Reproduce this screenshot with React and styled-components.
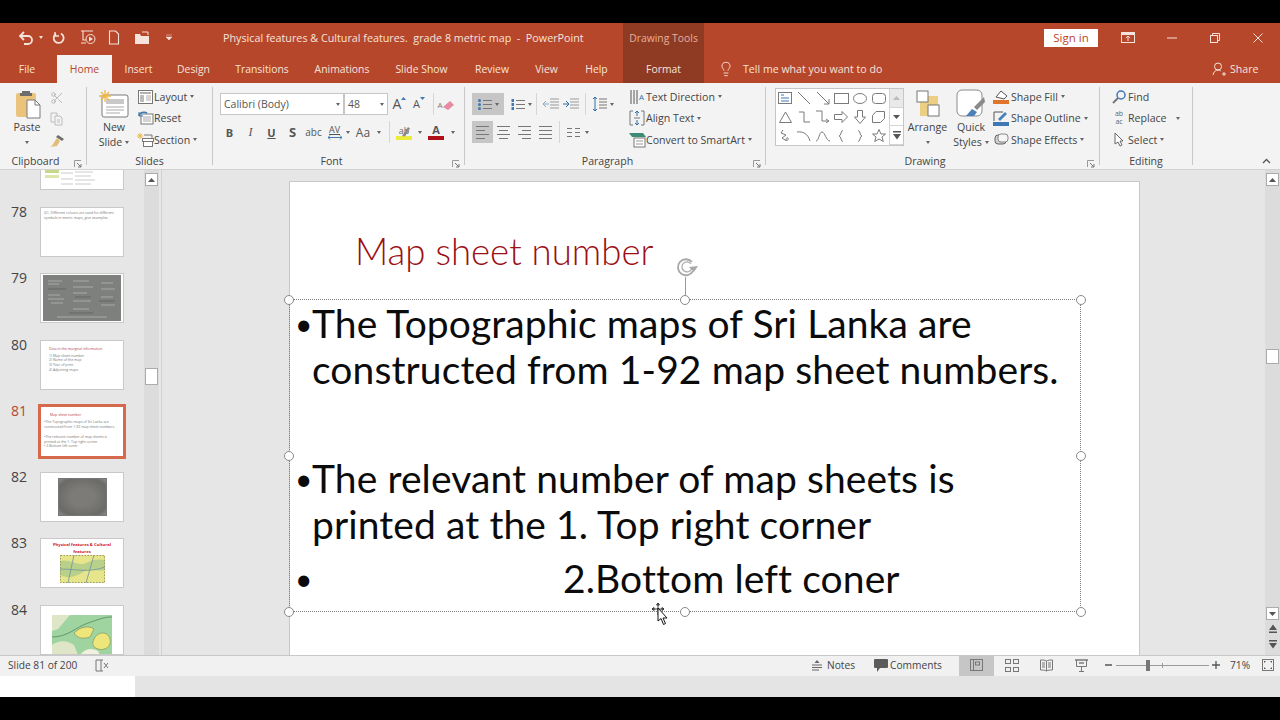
import React from 'react';
import styled, { createGlobalStyle } from 'styled-components';
import { Scissors, Lightbulb } from 'lucide-react';

const ORANGE = '#b7472a';
const UI = '"Open Sans", "Liberation Sans", sans-serif';
const SLIDE = 'Lato, "Open Sans", sans-serif';

const Global = createGlobalStyle`
  html, body { margin: 0; padding: 0; background: #000; }
  body { font-family: ${UI}; font-size: 10.6px; color: #444; }
  * { box-sizing: border-box; }
`;

const Page = styled.div`
  width: 1280px;
  height: 720px;
  padding: 23px 0;
  background: #000;
  overflow: hidden;
`;
const Win = styled.div`
  height: 674px;
  display: flex;
  flex-direction: column;
  background: #e6e6e6;
`;

/* title bar */
const TitleBar = styled.div`
  height: 29px;
  background: ${ORANGE};
  display: flex;
  align-items: stretch;
  color: #f6e3dc;
`;
const Qat = styled.div`
  width: 223px;
  padding-left: 18px;
  display: flex;
  align-items: center;
`;
const QatSlot = styled.span`
  width: ${p => p.$w}px;
  display: flex;
  align-items: center;
  justify-content: center;
`;
const DocTitle = styled.div`
  width: 400px;
  line-height: 31px;
  font-size: 10.75px;
  white-space: pre;
`;
const ContextCell = styled.div`
  width: 81px;
  background: #8f3a22;
  color: ${p => p.$dim ? '#e6b09c' : '#f6e3dc'};
  text-align: center;
  font-size: 10.4px;
  line-height: ${p => p.$dim ? '31px' : '34px'};
`;
const SignIn = styled.div`
  width: 54px;
  height: 18px;
  margin: 6px 0 0 340px;
  background: #fff;
  color: ${ORANGE};
  font-size: 11.5px;
  line-height: 18px;
  text-align: center;
`;
const WinBtn = styled.div`
  width: ${p => p.$w}px;
  display: flex;
  align-items: center;
  justify-content: center;
`;

/* tabs */
const TabBar = styled.div`
  height: 31px;
  background: ${ORANGE};
  display: flex;
  align-items: stretch;
  color: #f6e3dc;
`;
const Tab = styled.div`
  width: ${p => p.$w}px;
  margin-top: ${p => p.$active ? 3 : 0}px;
  background: ${p => p.$active ? '#f3f3f3' : 'transparent'};
  color: ${p => p.$active ? ORANGE : 'inherit'};
  text-align: center;
  font-size: 10.4px;
  line-height: ${p => p.$active ? '28px' : '34px'};
`;
const TellMe = styled.div`
  display: flex;
  align-items: center;
  width: 508px;
  padding: 2px 0 0 14px;
  gap: 9px;
  font-size: 10.6px;
`;
const Share = styled.div`
  display: flex;
  align-items: center;
  padding-top: 2px;
  gap: 4px;
  font-size: 10.6px;
`;

/* ribbon */
const Ribbon = styled.div`
  height: 87px;
  padding-top: 4px;
  background: #f3f3f3;
  border-bottom: 1px solid #d2d2d2;
  display: flex;
  position: relative;
`;
const Group = styled.div`
  width: ${p => p.$w}px;
  height: 78px;
  border-right: 1px solid #c8c8c8;
  position: relative;
`;
const GroupBody = styled.div`
  height: 66px;
  display: flex;
  padding-left: ${p => p.$pad || 0}px;
`;
const GroupLabel = styled.div`
  height: 16px;
  line-height: 16px;
  text-align: center;
  font-size: 10.6px;
  color: #444;
  padding-right: ${p => p.$shift || 0}px;
`;
const Launcher = styled.span`
  position: absolute;
  right: 4px;
  bottom: -3px;
  display: flex;
`;
const Collapse = styled.span`
  position: absolute;
  right: 9px;
  bottom: 5px;
  display: flex;
`;
const BigTool = styled.div`
  width: ${p => p.$w}px;
  display: flex;
  flex-direction: column;
  align-items: center;
  line-height: 15px;
  text-align: center;
`;
const BigIcon = styled.div`
  height: 33px;
  display: flex;
  align-items: center;
  justify-content: center;
  padding-left: ${p => p.$nudge || 0}px;
`;
const LabelLine = styled.div`
  height: 15px;
  display: flex;
  align-items: center;
  justify-content: center;
  gap: 3px;
`;
const Stack = styled.div`
  display: flex;
  flex-direction: column;
  margin-top: -1px;
`;
const RowBtn = styled.div`
  height: 21.5px;
  display: flex;
  align-items: center;
  white-space: nowrap;
`;
const RowIcon = styled.span`
  width: ${p => p.$w || 18}px;
  display: flex;
  align-items: center;
  justify-content: center;
  flex: none;
`;
const Caret = styled.span`
  display: inline-block;
  width: 0;
  height: 0;
  margin-left: ${p => p.$m ?? 3}px;
  border-left: 2.5px solid transparent;
  border-right: 2.5px solid transparent;
  border-top: 3px solid ${p => p.$c || '#666'};
  flex: none;
`;
const MiniStack = styled.div`
  width: ${p => p.$w}px;
  display: flex;
  flex-direction: column;
  align-items: center;
`;
const MiniIcon = styled.div`
  height: 21.5px;
  display: flex;
  align-items: center;
`;
const FontCol = styled.div`
  ${p => p.$w ? `width: ${p.$w}px;` : ''}
  padding-top: 6px;
  display: flex;
  flex-direction: column;
  gap: 6px;
`;
const ToolRow = styled.div`
  height: 22px;
  display: flex;
  align-items: center;
  margin-left: ${p => p.$ml || 0}px;
`;
const FontBox = styled.div`
  width: ${p => p.$w}px;
  height: 22px;
  padding: 0 3px;
  background: #fff;
  border: 1px solid #c6c6c6;
  display: flex;
  align-items: center;
  justify-content: space-between;
  font-size: 10.5px;
  color: #555;
`;
const Tool = styled.div`
  width: ${p => p.$w}px;
  height: 22px;
  margin-left: ${p => p.$ml || 0}px;
  display: flex;
  align-items: center;
  justify-content: center;
  background: ${p => p.$on ? '#c6c6c6' : 'transparent'};
  font-size: ${p => p.$fs || 11}px;
  font-weight: ${p => p.$b ? 700 : 400};
  font-style: ${p => p.$i ? 'italic' : 'normal'};
  text-decoration: ${p => p.$u ? 'underline' : 'none'};
  font-family: ${p => p.$serif ? '"Liberation Serif", serif' : 'inherit'};
  color: #555;
`;
const CaretCell = styled.span`
  width: ${p => p.$w}px;
  display: flex;
  justify-content: center;
`;
const VSep = styled.span`
  width: 1px;
  height: 22px;
  margin-left: ${p => p.$ml || 0}px;
  background: #d6d6d6;
  flex: none;
`;

/* icons built from a real letter and a small mark */
const Glyph = styled.span`
  display: inline-flex;
  flex-direction: ${p => p.$col ? 'column' : 'row'};
  align-items: ${p => p.$col ? 'center' : 'flex-start'};
  position: relative;
`;
const Letter = styled.span`
  font-size: ${p => p.$fs}px;
  line-height: ${p => p.$lh || p.$fs}px;
  font-weight: ${p => p.$b ? 700 : 400};
  text-decoration: ${p => p.$u ? 'underline' : 'none'};
  color: ${p => p.$c || '#555'};
  margin-left: ${p => p.$ml || 0}px;
`;
const GlyphOver = styled.span`
  position: absolute;
  right: ${p => p.$r || 0}px;
  bottom: ${p => p.$b || 0}px;
  display: flex;
`;

/* shape gallery */
const Gallery = styled.div`
  width: 129px;
  height: 58px;
  margin-top: 1px;
  background: #fff;
  border: 1px solid #c6c6c6;
  display: flex;
`;
const ShapeGrid = styled.div`
  width: 113px;
  display: grid;
  grid-template-columns: repeat(6, 18.7px);
  grid-template-rows: repeat(3, 1fr);
  place-items: center;
`;
const GalleryNav = styled.div`
  width: 14px;
  display: flex;
  flex-direction: column;
  border-left: 1px solid #d4d4d4;
`;
const NavBtn = styled.div`
  flex: 1;
  background: ${p => p.$off ? '#e9e9e9' : '#fff'};
  border-bottom: 1px solid #d4d4d4;
  display: flex;
  align-items: center;
  justify-content: center;
`;

/* main area */
const Main = styled.div`
  height: 485px;
  display: flex;
  overflow: hidden;
  background: #e6e6e6;
`;
const ThumbPanel = styled.div`
  width: 144px;
  overflow: hidden;
`;
const ThumbRow = styled.div`
  height: ${p => p.$first ? 37 : 66.3}px;
  display: flex;
  align-items: flex-start;
`;
const ThumbNum = styled.div`
  width: 40px;
  padding-left: 11px;
  font-size: 14px;
  line-height: 20px;
  margin-top: -5px;
  color: ${p => p.$sel ? '#b7472a' : '#444'};
`;
const Thumb = styled.div`
  width: 84px;
  height: ${p => p.$h || 50}px;
  background: #fff;
  border: 1px solid #c9c9c9;
  ${p => p.$first ? 'border-top: none;' : ''}
  ${p => p.$sel ? 'outline: 3px solid #d6694c; outline-offset: -1px;' : ''}
  overflow: hidden;
  display: flex;
  flex-direction: column;
  font-size: 3.5px;
  line-height: 4.9px;
  color: #777;
`;
const ThumbCopy = styled.div`
  padding: ${p => p.$pad || '3px 2px 0 3px'};
  color: ${p => p.$red ? '#b3443f' : 'inherit'};
  white-space: nowrap;
`;
const ThumbRedTitle = styled.div`
  margin-top: 2px;
  font-size: 4.2px;
  line-height: 7px;
  font-weight: 700;
  text-align: center;
  color: #d2131c;
`;
const ThumbArt = styled.div`
  display: flex;
  justify-content: center;
  padding-top: ${p => p.$top || 0}px;
`;
const Vignette = styled.div`
  width: 49px;
  height: 38px;
  background: radial-gradient(ellipse at center, #7c7b78 35%, #6a6a67 80%, #8b8b88 100%);
  border: 1px solid #77777a;
`;
const BarTrack = styled.div`
  width: ${p => p.$w}px;
  flex: none;
  background: ${p => p.$bg};
  padding: ${p => p.$pad || 0};
  display: flex;
  flex-direction: column;
  align-items: center;
`;
const ScrollBtn = styled.div`
  width: 13px;
  height: 13px;
  background: #fff;
  border: 1px solid #ababab;
  display: flex;
  align-items: center;
  justify-content: center;
  margin-top: ${p => p.$mt || 0}px;
`;
const ScrollThumb = styled.div`
  width: 13px;
  height: ${p => p.$h}px;
  margin-top: ${p => p.$mt}px;
  background: #fff;
  border: 1px solid #ababab;
`;
const PageBtn = styled.div`
  height: 16px;
  display: flex;
  align-items: center;
`;
const Divider = styled.div`
  width: 1px;
  flex: none;
  background: #d0d0d0;
`;
const Canvas = styled.div`
  flex: 1;
  padding: 11px 0 0 127px;
  overflow: hidden;
`;
const Slide = styled.div`
  width: 851px;
  height: 560px;
  background: #fff;
  border: 1px solid #c8c8c8;
`;
const SlideTitle = styled.div`
  margin-top: 46px;
  padding-left: 65px;
  height: 46px;
  font-family: ${SLIDE};
  font-weight: 300;
  font-size: 36.6px;
  line-height: 46px;
  color: #9c0f14;
`;
const Placeholder = styled.div`
  margin: 25px 0 0 -1px;
  width: 792px;
  height: 313px;
  padding: 0 0 0 5px;
  border: 1px dotted #7d7d7d;
  position: relative;
  font-family: ${SLIDE};
  font-size: 39px;
  line-height: 46px;
  letter-spacing: 0.1px;
  color: #0b0b0b;
`;
const Para = styled.div`
  display: flex;
  margin-top: ${p => p.$mt || 0}px;
`;
const Bullet = styled.span`
  width: 17px;
  flex: none;
  font-size: 30px;
`;
const ParaText = styled.div`
  padding-left: ${p => p.$indent || 0}px;
  white-space: nowrap;
`;
const Handle = styled.span`
  position: absolute;
  left: ${p => p.$x}px;
  top: ${p => p.$y}px;
  width: 10px;
  height: 10px;
  margin: -5px 0 0 -6px;
  border-radius: 50%;
  background: #fff;
  border: 1.5px solid #8a8a8a;
`;
const RotateStem = styled.span`
  position: absolute;
  left: 395px;
  top: -23px;
  width: 1px;
  height: 19px;
  background: #9a9a9a;
`;
const RotateIcon = styled.span`
  position: absolute;
  left: 385px;
  top: -43px;
  display: flex;
`;
const Pointer = styled.span`
  position: absolute;
  left: 361px;
  top: 302px;
  display: flex;
`;

/* status bar */
const StatusBar = styled.div`
  height: 21px;
  padding-bottom: 2px;
  background: #f1f1f1;
  border-top: 1px solid #c8c8c8;
  display: flex;
  align-items: center;
  font-size: 10.2px;
  color: #444;
`;
const StatusText = styled.span`
  width: ${p => p.$w}px;
  padding-left: ${p => p.$pad || 0}px;
  white-space: nowrap;
`;
const StatusItem = styled.span`
  width: ${p => p.$w}px;
  margin-left: ${p => p.$ml || 0}px;
  height: 20px;
  margin-bottom: ${p => p.$on ? -2 : 0}px;
  padding-bottom: ${p => p.$on ? 2 : 0}px;
  display: flex;
  align-items: center;
  justify-content: center;
  background: ${p => p.$on ? '#c6c6c6' : 'transparent'};
`;
const ZoomTrack = styled.span`
  width: 93px;
  height: 1px;
  background: #9a9a9a;
  position: relative;
`;
const ZoomKnob = styled.span`
  position: absolute;
  left: 30px;
  top: -5px;
  width: 4px;
  height: 11px;
  background: #777;
`;
const ZoomTick = styled.span`
  position: absolute;
  left: 46px;
  top: -2px;
  width: 1px;
  height: 5px;
  background: #9a9a9a;
`;
const Strip = styled.div`
  height: 21px;
  display: flex;
  background: #e4e4e4;
`;
const StripWhite = styled.div`
  width: 135px;
  background: #fff;
`;

/* icons */
const L = '#f6e3dc';
const Svg = ({ w = 16, h = 16, children }) => (
  <svg width={w} height={h} viewBox={`0 0 ${w} ${h}`} fill="none">{children}</svg>
);
const Undo = () => <Svg w={16} h={14}><path d="M2 5h8a4 4 0 0 1 0 8H6" stroke={L} strokeWidth="1.8" /><path d="M6 1 2 5l4 4" stroke={L} strokeWidth="1.8" /></Svg>;
const Redo = () => <Svg w={14} h={14}><path d="M9 2.500a5 5 0 1 1-5 .2" stroke={L} strokeWidth="1.8" /><path d="M3 1v4h4" stroke={L} strokeWidth="1.4" /></Svg>;
const FromStart = () => <Svg w={16} h={15}><path d="M1 1h12M3 1v9h3M1 13h5" stroke={L} strokeWidth="1.1" /><circle cx="10.500" cy="9" r="4.500" stroke={L} /><path d="m9 6.500 4 2.500-4 2.500z" fill={L} /></Svg>;
const NewDoc = () => <Svg w={12} h={15}><path d="M1.500 1h6l3 3v10h-9z" stroke={L} strokeWidth="1.1" /></Svg>;
const OpenDoc = () => <Svg w={16} h={14}><path d="M1 3h5l1 2h8v8H1z" fill={L} /><path d="M8 1h6v3" stroke={L} /></Svg>;
const Customize = () => <Svg w={6} h={7}><path d="M0 1h6M0 3h6l-3 3z" fill={L} stroke={L} strokeWidth=".5" /></Svg>;
const Present = () => <Svg w={14} h={11}><rect x=".5" y=".5" width="13" height="10" stroke={L} /><rect x="1" y="1" width="12" height="2" fill={L} /><path d="M7 9V4M4.800 6 7 4l2.200 2" stroke={L} /></Svg>;
const Minimize = () => <Svg w={10} h={2}><path d="M0 1h10" stroke={L} /></Svg>;
const Restore = () => <Svg w={10} h={10}><rect x=".5" y="2.500" width="7" height="7" stroke={L} /><path d="M2.500 2.500v-2h7v7h-2" stroke={L} /></Svg>;
const CloseX = () => <Svg w={10} h={10}><path d="m.5.5 9 9m0-9-9 9" stroke={L} /></Svg>;
const ShareIcon = () => <Svg w={14} h={14}><circle cx="6" cy="4.500" r="3.500" stroke={L} /><path d="M1 13c.5-3 2.500-5 5-5 1 0 2 .3 2.800 1M10 12h4M12 10v4" stroke={L} /></Svg>;

const PasteIcon = () => <Svg w={28} h={30}><rect x="1" y="4" width="20" height="24" rx="2" fill="#eac47c" /><path d="M7 4V2h8v2h2v3H5V4z" fill="#6d6d6d" /><path d="M12 11h8l5 5v13H12z" fill="#fff" stroke="#7a7a7a" /><path d="M20 11v5h5" stroke="#7a7a7a" /></Svg>;
const CopyIcon = () => <Svg w={14} h={14}><path d="M1 1h6v9H1z" stroke="#bdbdbd" /><path d="M5 4h5l2 2v7H5z" fill="#f3f3f3" stroke="#bdbdbd" /><path d="M7 8h3M7 10h3" stroke="#bdbdbd" /></Svg>;
const Brush = () => <Svg w={16} h={14}><path d="m9 1 6 4-2 2-6-4z" fill="#6d6d6d" /><path d="m8 4 3 3-3 5-7 1c3-1 3-4 7-9z" fill="#e2bd76" /></Svg>;
const NewSlideIcon = () => <Svg w={30} h={28}><rect x="3" y="5" width="26" height="22" rx="2" fill="#fff" stroke="#7a7a7a" /><rect x="7" y="9" width="18" height="5" fill="#c9c9c9" /><path d="M7 17h18M7 20h18M7 23h14" stroke="#aaa" /><path d="M6 0v12M0 6h12M2 2l8 8m0-8-8 8" stroke="#eeb94b" strokeWidth="1.3" /></Svg>;
const LayoutIcon = () => <Svg w={15} h={14}><rect x=".5" y=".5" width="14" height="13" stroke="#777" fill="#fff" /><path d="M2 3h11" stroke="#999" strokeWidth="1.5" /><rect x="2" y="5" width="4" height="7" fill="#bbb" /><path d="M8 6h5M8 8h5M8 10h5" stroke="#aaa" /></Svg>;
const ResetIcon = () => <Svg w={16} h={14}><rect x="3" y="3" width="12" height="10" fill="#fff" stroke="#777" /><path d="M5 6h8M5 8h8M5 10h8" stroke="#aaa" /><path d="M1 5a5 4 0 0 1 8-3" stroke="#3f78b3" strokeWidth="1.5" /><path d="M1 1v4h4" stroke="#3f78b3" /></Svg>;
const SectionIcon = () => <Svg w={17} h={15}><path d="M3 1v6M0 4h6M1 2l4 4m0-4-4 4" stroke="#eeb94b" /><rect x="5.500" y="6.500" width="11" height="3" fill="#fff" stroke="#777" /><rect x="6.500" y="9.500" width="9" height="5" fill="#fff" stroke="#777" /><path d="M7 3h8v3" stroke="#777" /></Svg>;
const Launch = () => <Svg w={8} h={8}><path d="M.5 7V.5H7" stroke="#999" /><path d="m3 3 4 4M7 4v3H4" stroke="#777" /></Svg>;
const SmallTri = ({ down }) => <Svg w={5} h={3}><path d={down ? 'M0 0h5L2.500 3z' : 'M0 3h5L2.500 0z'} fill="#3f78b3" /></Svg>;
const GrowA = () => <Glyph><Letter $fs={14}>A</Letter><SmallTri /></Glyph>;
const ShrinkA = () => <Glyph><Letter $fs={11} $lh={14}>A</Letter><SmallTri down /></Glyph>;
const Eraser = () => <Glyph><Letter $fs={8} $lh={13} $c="#777">A</Letter><Svg w={12} h={13}><path d="m0 9 7-6 4 4-6 5z" fill="#e88aa0" /></Svg></Glyph>;
const Spacing = () => <Glyph $col><Letter $fs={9} $lh={10} $u>AV</Letter><Svg w={14} h={5}><path d="M0 2.500h14M2 .5l-2 2 2 2m10-4 2 2-2 2" stroke="#3f78b3" /></Svg></Glyph>;
const Highlight = () => <Glyph $col><Letter $fs={9} $lh={11} $c="#666">ab</Letter><Svg w={16} h={4}><rect width="16" height="4" fill="#ecec3a" /></Svg><GlyphOver $r={2} $b={3}><Svg w={8} h={10}><path d="m0 9 6-9 2 1.500-5 8z" fill="#8a8a8a" /></Svg></GlyphOver></Glyph>;
const ColorA = () => <Glyph $col><Letter $fs={11} $lh={12} $b>A</Letter><Svg w={16} h={4}><rect width="16" height="4" fill="#b01116" /></Svg></Glyph>;
const Lines = ({ rows, w = 14, dots, num, color = '#777' }) => (
  <Svg w={w + (dots || num ? 5 : 0)} h={rows.length * 4 + 1}>
    {rows.map((x, i) => (
      <path key={i} d={`M${(dots || num ? 5 : 0) + (x[0] || 0)} ${i * 4 + 2.5}h${x[1] || w}`} stroke={color} />
    ))}
    {dots && rows.map((_, i) => <circle key={i} cx="1.500" cy={i * 4 + 2.5} r="1.500" fill="#3f78b3" />)}
    {num && rows.map((_, i) => <rect key={i} x=".5" y={i * 4 + 1} width="2.500" height="3" fill="#3f78b3" />)}
  </Svg>
);
const three = [[], [], []];
const IndentIcon = ({ out }) => <Svg w={16} h={14}><path d="M7 2h9M7 5h9M7 8h9M7 11h9" stroke="#999" /><path d={out ? 'M6 7H0m3-3L0 7l3 3' : 'M0 7h6M3 4l3 3-3 3'} stroke={out ? '#8aa8c5' : '#2f6ca5'} /></Svg>;
const LineSpace = () => <Svg w={15} h={16}><path d="M3 1v14M1 3l2-2 2 2M1 13l2 2 2-2" stroke="#2f6ca5" /><path d="M7 3h8M7 6h8M7 9h8M7 12h8" stroke="#777" /></Svg>;
const TextDir = () => <Glyph><Svg w={8} h={16}><path d="M1 1v14M4 1v14M7 1v14" stroke="#555" /></Svg><Letter $fs={8} $lh={16} $c="#2f6ca5" $ml={1}>A</Letter></Glyph>;
const AlignText = () => <Svg w={16} h={16}><path d="M4 1H1v14h3M12 1h3v14h-3" stroke="#777" /><path d="M8 1v5M6 3l2-2 2 2M8 10v5M6 13l2 2 2-2" stroke="#2f6ca5" /><path d="M5 8h6" stroke="#777" /></Svg>;
const SmartArt = () => <Svg w={18} h={16}><path d="M1 1h14l3 4H4z" fill="#3c8b76" /><rect x="6" y="6" width="11" height="9" fill="#fff" stroke="#777" /><path d="M8 9h7M8 12h7" stroke="#999" /></Svg>;
const ArrangeIcon = () => <Svg w={24} h={28}><rect x="4" y="6" width="18" height="20" fill="#eccf83" /><rect x="1" y="1" width="11" height="11" fill="#fff" stroke="#777" /><rect x="12" y="15" width="11" height="11" fill="#fff" stroke="#777" /></Svg>;
const QuickStyles = () => <Svg w={30} h={30}><rect x="1" y="1" width="25" height="26" rx="5" fill="#fff" stroke="#8a8a8a" /><path d="m10 27 6-7 5 3-3 4z" fill="#4b80b8" /><path d="m18 18 10-10 1 5-8 8z" fill="#8a8a8a" /></Svg>;
const ShapeFill = () => <Svg w={16} h={16}><path d="m3 8 5-6 6 5-3 3z" fill="#fff" stroke="#555" /><rect y="11" width="16" height="4" fill="#e0762c" /></Svg>;
const ShapeOutline = () => <Svg w={16} h={16}><path d="M1 11V2h9" stroke="#555" /><path d="m5 9 7-7 2 2-7 7z" fill="#4b80b8" /><rect y="12" width="16" height="4" fill="#3d78b5" /></Svg>;
const ShapeEffects = () => <Svg w={16} h={14}><rect x="2" y="2" width="11" height="9" rx="3" fill="#cfcfcf" stroke="#666" /><rect x="5" y="1" width="10" height="8" rx="3" fill="#f6f6f6" stroke="#888" /></Svg>;
const FindIcon = () => <Svg w={14} h={14}><circle cx="9" cy="5" r="4" stroke="#3d78b5" strokeWidth="1.5" /><path d="m6 8-5 5" stroke="#777" strokeWidth="2" /></Svg>;
const ReplaceIcon = () => <Glyph $col><Letter $fs={7} $lh={8} $c="#666">ab</Letter><Letter $fs={7} $lh={8} $c="#666">ac</Letter></Glyph>;
const SelectIcon = () => <Svg w={10} h={15}><path d="M1 1v11l3-2 2 4 2-1-2-4h3z" fill="#fff" stroke="#666" /></Svg>;
const Chevron = () => <Svg w={9} h={6}><path d="m1 5 3.500-3.500L8 5" stroke="#555" strokeWidth="1.3" /></Svg>;
const Tri = ({ down, color = '#555' }) => <Svg w={7} h={4}><path d={down ? 'M0 0h7L3.500 4z' : 'M0 4h7L3.500 0z'} fill={color} /></Svg>;
const DoubleTri = ({ down }) => <Svg w={8} h={9}><path d={down ? 'M0 0h8v1.500H0zM0 3h8L4 8.500z' : 'M0 7.500h8V9H0zM0 6h8L4 .5z'} fill="#555" /></Svg>;
const BookCheck = () => <Svg w={14} h={13}><path d="M6 1H1v11h5V1M6 1h2M6 12h2" stroke="#777" /><path d="m9 4 4 5m0-5-4 5" stroke="#777" /></Svg>;
const NotesIcon = () => <Svg w={10} h={11}><path d="M5 0 2.500 3h5z" fill="#666" /><path d="M0 5h10M0 7.500h10M0 10h7" stroke="#666" /></Svg>;
const CommentIcon = () => <Svg w={14} h={13}><path d="M1 0h12a1 1 0 0 1 1 1v7a1 1 0 0 1-1 1H6l-3 4V9H1a1 1 0 0 1-1-1V1a1 1 0 0 1 1-1z" fill="#5b5b5b" /></Svg>;
const NormalView = () => <Svg w={13} h={12}><rect x=".5" y=".5" width="12" height="11" stroke="#777" /><path d="M3.500 1v10" stroke="#777" /><rect x="5.500" y="3" width="4" height="3" stroke="#777" /></Svg>;
const GridView = () => <Svg w={14} h={13}><rect x=".5" y=".5" width="5" height="4" stroke="#777" /><rect x="8.500" y=".5" width="5" height="4" stroke="#777" /><rect x=".5" y="8.500" width="5" height="4" stroke="#777" /><rect x="8.500" y="8.500" width="5" height="4" stroke="#777" /></Svg>;
const ReadView = () => <Svg w={13} h={13}><path d="M6.500 2C5 1 3 1 .5 1v10c2.500 0 4.500 0 6 1 1.500-1 3.500-1 6-1V1c-2.500 0-4.500 0-6 1zM6.500 2v10M2 4h3M2 6h3M2 8h3M8 4h3M8 6h3M8 8h3" stroke="#777" /></Svg>;
const ShowView = () => <Svg w={13} h={13}><path d="M0 1h13" stroke="#777" strokeWidth="1.5" /><path d="M1.500 1v6.500h10V1M6.500 8v4M4 12.500h5" stroke="#777" /><rect x="4" y="3" width="5" height="2" fill="#999" /></Svg>;
const FitIcon = () => <Svg w={12} h={12}><rect x=".5" y=".5" width="11" height="11" stroke="#777" /><path d="M2 2h2L2 4zM10 2H8l2 2zM2 10h2l-2-2zM10 10H8l2-2z" fill="#555" /></Svg>;
const RotateGlyph = () => <Svg w={24} h={22}><path d="M17 5a8 8 0 1 0 1 9" stroke="#a8a8a8" strokeWidth="1.8" /><path d="M16 7a5 5 0 1 0 .5 5" stroke="#a8a8a8" strokeWidth="1.2" /><path d="m14 10 9-1-4 6z" fill="#a8a8a8" /></Svg>;
const MoveCursor = () => <Svg w={18} h={26}><path d="M1 7h12M7 1v12M1 7l2-1.500v3zM13 7l-2-1.500v3zM7 1 5.500 3h3z" stroke="#111" strokeWidth=".8" /><path d="M7 6v13l3-2.500 2.500 6 2-1-2.500-5.500h4z" fill="#fff" stroke="#111" /></Svg>;

const s = '#7a7a7a';
const shapes = [
  <Svg w={14} h={12} key="a"><rect x=".5" y=".5" width="13" height="11" stroke={s} /><path d="M3 3h3M3 6h8M3 9h8" stroke="#3f78b3" /></Svg>,
  <Svg w={14} h={14} key="b"><path d="m1 1 12 12" stroke={s} /></Svg>,
  <Svg w={14} h={14} key="c"><path d="m1 1 12 12M13 8v5H8" stroke={s} /></Svg>,
  <Svg w={15} h={11} key="d"><rect x=".5" y=".5" width="14" height="10" stroke={s} /></Svg>,
  <Svg w={14} h={11} key="e"><ellipse cx="7" cy="5.500" rx="6.500" ry="5" stroke={s} /></Svg>,
  <Svg w={14} h={11} key="f"><rect x=".5" y=".5" width="13" height="10" rx="3" stroke={s} /></Svg>,
  <Svg w={13} h={12} key="g"><path d="M6.500 1 12.500 11.500H.5z" stroke={s} /></Svg>,
  <Svg w={13} h={12} key="h"><path d="M1 1h5v10h6" stroke={s} /></Svg>,
  <Svg w={14} h={13} key="i"><path d="M0 1h6v10h6m-2-2 3 2-3 2" stroke={s} /></Svg>,
  <Svg w={14} h={12} key="j"><path d="M.5 3.500H8V.5L13.500 6 8 11.500v-3H.5z" stroke={s} /></Svg>,
  <Svg w={12} h={14} key="k"><path d="M3.500.5h5V7h3L6 13.500.5 7h3z" stroke={s} /></Svg>,
  <Svg w={13} h={12} key="l"><path d="M.5 11.500v-7L4 .5h8.500v7l-4 4z" stroke={s} /></Svg>,
  <Svg w={10} h={14} key="m"><path d="M3 1 1 4l5 2-4 3 3 2c2 1 4 0 3-2-1-1-2 0-2 3" stroke={s} /></Svg>,
  <Svg w={14} h={12} key="n"><path d="M0 2c6-1 11 2 13 9" stroke={s} /></Svg>,
  <Svg w={14} h={12} key="o"><path d="M0 11c3 0 3-9 6-9s4 9 8 9" stroke={s} /></Svg>,
  <Svg w={6} h={12} key="p"><path d="M5 .5C2 .5 4 5.500 1 6c3 .5 1 5.500 4 5.500" stroke={s} /></Svg>,
  <Svg w={6} h={12} key="q"><path d="M1 .5C4 .5 2 5.500 5 6c-3 .5-1 5.500-4 5.500" stroke={s} /></Svg>,
  <Svg w={14} h={13} key="r"><path d="M7 .5 9 5h4.500L10 8l1.300 4.500L7 10l-4.300 2.500L4 8 .5 5H5z" stroke={s} /></Svg>,
];

const TopArt = () => (
  <svg width="82" height="19" viewBox="0 0 82 19">
    <rect x="4" y="0" width="14" height="3" fill="#c8d88a" /><rect x="4" y="5" width="14" height="3" fill="#dde5a8" />
    <path d="M20 3h12M20 9h12M20 14h12M34 2h18M34 6h16M34 10h20M34 14h16" stroke="#aaa" strokeWidth=".6" />
  </svg>
);
const PhotoArt = () => (
  <svg width="78" height="46" viewBox="0 0 78 46">
    <rect width="78" height="46" fill="#7d807c" />
    <path d="M5 6h14M5 9h11M5 20h12M5 24h16M8 28h12M30 6h16M30 12h20M30 18h14M30 26h18M30 34h16M58 8h12M58 14h14M58 22h12M58 30h14M14 42h50" stroke="#a8aaa6" strokeWidth="1" />
    <path d="M5 14h18M32 22h16M56 26h16M26 38h24" stroke="#5d605d" strokeWidth=".8" />
  </svg>
);
const PaperMap = () => (
  <svg width="45" height="28" viewBox="0 0 45 28" fill="none">
    <rect width="45" height="28" fill="#e6e58c" />
    <path d="M0 6c10-3 18 6 26 2s12-4 19-3v10c-8 2-14-3-22 2S8 24 0 20z" fill="#b9d08a" />
    <path d="M14 0 8 28M34 0l-8 28M0 14c14 0 30 4 45-2" stroke="#6f93a0" strokeWidth=".8" />
    <rect x=".5" y=".5" width="44" height="27" stroke="#9a9a6a" strokeDasharray="1.500 1.500" />
  </svg>
);
const GreenMap = () => (
  <svg width="60" height="40" viewBox="0 0 60 40" fill="none">
    <rect width="60" height="40" fill="#9fd4a0" />
    <path d="M0 0h18L6 14 0 16zM0 30c8-6 16-4 22 0l4 10H0z" fill="#dfe6c8" />
    <path d="M22 18c6-6 14-8 20-4l-4 8c-6 2-12 2-16-4zM42 24c4-8 14-8 16 0s-6 12-12 10-6-6-4-10z" fill="#eee67a" stroke="#7a8a50" strokeWidth=".6" />
    <path d="M0 22c16 0 24-10 36-14s16-6 24-6" stroke="#3d6a4a" strokeWidth=".6" />
    <path d="M28 40c4-6 12-8 18-4l2 4z" fill="#f2f0df" />
  </svg>
);

const App = () => (
  <Page>
    <Global />
    <Win>
      <TitleBar>
        <Qat>
          <QatSlot $w={16}><Undo /></QatSlot>
          <QatSlot $w={13}><Caret $m={0} $c={L} /></QatSlot>
          <QatSlot $w={24}><Redo /></QatSlot>
          <QatSlot $w={34}><FromStart /></QatSlot>
          <QatSlot $w={17}><NewDoc /></QatSlot>
          <QatSlot $w={39}><OpenDoc /></QatSlot>
          <QatSlot $w={15}><Customize /></QatSlot>
        </Qat>
        <DocTitle>Physical features &amp; Cultural features.  grade 8 metric map  -  PowerPoint</DocTitle>
        <ContextCell $dim>Drawing Tools</ContextCell>
        <SignIn>Sign in</SignIn>
        <WinBtn $w={60}><Present /></WinBtn>
        <WinBtn $w={28}><Minimize /></WinBtn>
        <WinBtn $w={58}><Restore /></WinBtn>
        <WinBtn $w={28}><CloseX /></WinBtn>
      </TitleBar>
      <TabBar>
        <Tab $w={54}>File</Tab>
        <Tab $w={3} />
        <Tab $w={55} $active>Home</Tab>
        <Tab $w={53}>Insert</Tab>
        <Tab $w={57}>Design</Tab>
        <Tab $w={80}>Transitions</Tab>
        <Tab $w={80}>Animations</Tab>
        <Tab $w={79}>Slide Show</Tab>
        <Tab $w={62}>Review</Tab>
        <Tab $w={47}>View</Tab>
        <Tab $w={53}>Help</Tab>
        <ContextCell>Format</ContextCell>
        <TellMe>
          <Lightbulb size={16} strokeWidth={1.4} color={L} />
          Tell me what you want to do
        </TellMe>
        <Share><ShareIcon />Share</Share>
      </TabBar>

      <Ribbon>
        <Group $w={87}>
          <GroupBody $pad={2}>
            <BigTool $w={50}>
              <BigIcon $nudge={4}><PasteIcon /></BigIcon>
              <LabelLine>Paste</LabelLine>
              <LabelLine><Caret $m={0} /></LabelLine>
            </BigTool>
            <MiniStack $w={10}>
              <MiniIcon><Scissors size={14} strokeWidth={1.3} color="#a5a5a5" /></MiniIcon>
              <MiniIcon><CopyIcon /></MiniIcon>
              <MiniIcon><Brush /></MiniIcon>
            </MiniStack>
          </GroupBody>
          <GroupLabel $shift={15}>Clipboard</GroupLabel>
          <Launcher><Launch /></Launcher>
        </Group>

        <Group $w={126}>
          <GroupBody $pad={4}>
            <BigTool $w={46}>
              <BigIcon><NewSlideIcon /></BigIcon>
              <LabelLine>New</LabelLine>
              <LabelLine>Slide<Caret $m={0} /></LabelLine>
            </BigTool>
            <Stack>
              <RowBtn><RowIcon $w={17}><LayoutIcon /></RowIcon>Layout<Caret /></RowBtn>
              <RowBtn><RowIcon $w={17}><ResetIcon /></RowIcon>Reset</RowBtn>
              <RowBtn><RowIcon $w={17}><SectionIcon /></RowIcon>Section<Caret /></RowBtn>
            </Stack>
          </GroupBody>
          <GroupLabel>Slides</GroupLabel>
        </Group>

        <Group $w={252}>
          <GroupBody $pad={7}>
            <FontCol>
              <ToolRow>
                <FontBox $w={124}>Calibri (Body)<Caret /></FontBox>
                <FontBox $w={44}>48<Caret /></FontBox>
                <Tool $w={19} $ml={2}><GrowA /></Tool>
                <Tool $w={20}><ShrinkA /></Tool>
                <VSep $ml={4} />
                <Tool $w={24}><Eraser /></Tool>
              </ToolRow>
              <ToolRow $ml={-1}>
                <Tool $w={21} $b>B</Tool>
                <Tool $w={21} $i $serif $fs={12}>I</Tool>
                <Tool $w={21} $u $b>U</Tool>
                <Tool $w={21} $b $fs={13}>S</Tool>
                <Tool $w={21} $fs={10}>abc</Tool>
                <Tool $w={21}><Spacing /></Tool>
                <CaretCell $w={5}><Caret $m={0} /></CaretCell>
                <Tool $w={26} $fs={12}>Aa</Tool>
                <CaretCell $w={5}><Caret $m={0} /></CaretCell>
                <VSep $ml={8} />
                <Tool $w={28}><Highlight /></Tool>
                <CaretCell $w={4}><Caret $m={0} /></CaretCell>
                <Tool $w={28}><ColorA /></Tool>
                <CaretCell $w={5}><Caret $m={0} /></CaretCell>
              </ToolRow>
            </FontCol>
          </GroupBody>
          <GroupLabel $shift={14}>Font</GroupLabel>
          <Launcher><Launch /></Launcher>
        </Group>

        <Group $w={301}>
          <GroupBody $pad={7}>
            <FontCol $w={156}>
              <ToolRow>
                <Tool $w={32} $on><Lines rows={three} w={9} dots /><Caret /></Tool>
                <Tool $w={26} $ml={4}><Lines rows={three} w={9} num /><Caret /></Tool>
                <VSep $ml={2} />
                <Tool $w={20} $ml={4}><IndentIcon out /></Tool>
                <Tool $w={20}><IndentIcon /></Tool>
                <VSep $ml={4} />
                <Tool $w={30} $ml={2}><LineSpace /><Caret /></Tool>
              </ToolRow>
              <ToolRow>
                <Tool $w={21} $on><Lines rows={[[0, 13], [0, 9], [0, 13], [0, 9]]} w={13} /></Tool>
                <Tool $w={21}><Lines rows={[[0, 13], [2, 9], [0, 13], [2, 9]]} w={13} /></Tool>
                <Tool $w={21}><Lines rows={[[0, 13], [4, 9], [0, 13], [4, 9]]} w={13} /></Tool>
                <Tool $w={21}><Lines rows={[[0, 13], [0, 13], [0, 13], [0, 13]]} w={13} /></Tool>
                <VSep $ml={3} />
                <Tool $w={21} $ml={3}><Svg w={13} h={11}><path d="M0 1.500h5M8 1.500h5M0 5.500h5M8 5.500h5M0 9.500h5M8 9.500h5" stroke="#777" /></Svg></Tool>
                <CaretCell $w={6}><Caret $m={0} /></CaretCell>
              </ToolRow>
            </FontCol>
            <Stack>
              <RowBtn><RowIcon $w={18}><TextDir /></RowIcon>Text Direction<Caret /></RowBtn>
              <RowBtn><RowIcon $w={18}><AlignText /></RowIcon>Align Text<Caret /></RowBtn>
              <RowBtn><RowIcon $w={18}><SmartArt /></RowIcon>Convert to SmartArt<Caret /></RowBtn>
            </Stack>
          </GroupBody>
          <GroupLabel $shift={15}>Paragraph</GroupLabel>
          <Launcher><Launch /></Launcher>
        </Group>

        <Group $w={334}>
          <GroupBody $pad={9}>
            <Gallery>
              <ShapeGrid>{shapes}</ShapeGrid>
              <GalleryNav>
                <NavBtn $off><Tri color="#bbb" /></NavBtn>
                <NavBtn><Tri down /></NavBtn>
                <NavBtn><DoubleTri down /></NavBtn>
              </GalleryNav>
            </Gallery>
            <BigTool $w={47}>
              <BigIcon><ArrangeIcon /></BigIcon>
              <LabelLine>Arrange</LabelLine>
              <LabelLine><Caret $m={0} /></LabelLine>
            </BigTool>
            <BigTool $w={40}>
              <BigIcon><QuickStyles /></BigIcon>
              <LabelLine>Quick</LabelLine>
              <LabelLine>Styles<Caret $m={0} /></LabelLine>
            </BigTool>
            <Stack>
              <RowBtn><RowIcon $w={20}><ShapeFill /></RowIcon>Shape Fill<Caret /></RowBtn>
              <RowBtn><RowIcon $w={20}><ShapeOutline /></RowIcon>Shape Outline<Caret /></RowBtn>
              <RowBtn><RowIcon $w={20}><ShapeEffects /></RowIcon>Shape Effects<Caret /></RowBtn>
            </Stack>
          </GroupBody>
          <GroupLabel $shift={15}>Drawing</GroupLabel>
          <Launcher><Launch /></Launcher>
        </Group>

        <Group $w={93}>
          <GroupBody $pad={10}>
            <Stack>
              <RowBtn><RowIcon><FindIcon /></RowIcon>Find</RowBtn>
              <RowBtn><RowIcon><ReplaceIcon /></RowIcon>Replace<Caret $m={9} /></RowBtn>
              <RowBtn><RowIcon><SelectIcon /></RowIcon>Select<Caret /></RowBtn>
            </Stack>
          </GroupBody>
          <GroupLabel>Editing</GroupLabel>
        </Group>
        <Collapse><Chevron /></Collapse>
      </Ribbon>

      <Main>
        <ThumbPanel>
          <ThumbRow $first>
            <ThumbNum />
            <Thumb $h={20} $first><TopArt /></Thumb>
          </ThumbRow>
          <ThumbRow>
            <ThumbNum>78</ThumbNum>
            <Thumb><ThumbCopy>Q1. Different colours are used for different<br />symbols in metric maps, give examples.</ThumbCopy></Thumb>
          </ThumbRow>
          <ThumbRow>
            <ThumbNum>79</ThumbNum>
            <Thumb><ThumbArt $top={1}><PhotoArt /></ThumbArt></Thumb>
          </ThumbRow>
          <ThumbRow>
            <ThumbNum>80</ThumbNum>
            <Thumb>
              <ThumbCopy $red $pad="6px 2px 0 8px">Data in the marginal information</ThumbCopy>
              <ThumbCopy $pad="2px 2px 0 8px">1) Map sheet number<br />2) Name of the map<br />3) Year of print<br />4) Adjoining maps</ThumbCopy>
            </Thumb>
          </ThumbRow>
          <ThumbRow>
            <ThumbNum $sel>81</ThumbNum>
            <Thumb $sel $h={51}>
              <ThumbCopy $red $pad="6px 2px 0 9px">Map sheet number</ThumbCopy>
              <ThumbCopy $pad="2px 2px 0 3px">•The Topographic maps of Sri Lanka are<br />constructed from 1-92 map sheet numbers.</ThumbCopy>
              <ThumbCopy $pad="5px 2px 0 3px">•The relevant number of map sheets is<br />printed at the 1. Top right corner<br />•                            2.Bottom left coner</ThumbCopy>
            </Thumb>
          </ThumbRow>
          <ThumbRow>
            <ThumbNum>82</ThumbNum>
            <Thumb><ThumbArt $top={5}><Vignette /></ThumbArt></Thumb>
          </ThumbRow>
          <ThumbRow>
            <ThumbNum>83</ThumbNum>
            <Thumb>
              <ThumbRedTitle>Physical features &amp; Cultural<br />features</ThumbRedTitle>
              <ThumbArt><PaperMap /></ThumbArt>
            </Thumb>
          </ThumbRow>
          <ThumbRow>
            <ThumbNum>84</ThumbNum>
            <Thumb><ThumbArt $top={9}><GreenMap /></ThumbArt></Thumb>
          </ThumbRow>
        </ThumbPanel>
        <BarTrack $w={15} $bg="#dcdcdc" $pad="3px 0 0">
          <ScrollBtn><Tri /></ScrollBtn>
          <ScrollThumb $mt={182} $h={17} />
        </BarTrack>
        <BarTrack $w={2} $bg="#e8e8e8" />
        <Divider />
        <Canvas>
          <Slide>
            <SlideTitle>Map sheet number</SlideTitle>
            <Placeholder>
              <Para><Bullet>•</Bullet><ParaText>The Topographic maps of Sri Lanka are<br />constructed from 1-92 map sheet numbers.</ParaText></Para>
              <Para $mt={63}><Bullet>•</Bullet><ParaText>The relevant number of map sheets is<br />printed at the 1. Top right corner</ParaText></Para>
              <Para $mt={8}><Bullet>•</Bullet><ParaText $indent={251}>2.Bottom left coner</ParaText></Para>
              <RotateStem />
              <RotateIcon><RotateGlyph /></RotateIcon>
              <Handle $x={0} $y={0} />
              <Handle $x={396} $y={0} />
              <Handle $x={792} $y={0} />
              <Handle $x={0} $y={156} />
              <Handle $x={792} $y={156} />
              <Handle $x={0} $y={312} />
              <Handle $x={396} $y={312} />
              <Handle $x={792} $y={312} />
              <Pointer><MoveCursor /></Pointer>
            </Placeholder>
          </Slide>
        </Canvas>
        <BarTrack $w={15} $bg="#dcdcdc" $pad="3px 0 0">
          <ScrollBtn><Tri /></ScrollBtn>
          <ScrollThumb $mt={163} $h={15} />
          <ScrollBtn $mt={243}><Tri down /></ScrollBtn>
          <PageBtn><DoubleTri /></PageBtn>
          <PageBtn><DoubleTri down /></PageBtn>
        </BarTrack>
      </Main>

      <StatusBar>
        <StatusText $w={95} $pad={8}>Slide 81 of 200</StatusText>
        <StatusItem $w={14}><BookCheck /></StatusItem>
        <StatusItem $w={10} $ml={703}><NotesIcon /></StatusItem>
        <StatusText $w={52} $pad={5}>Notes</StatusText>
        <StatusItem $w={14}><CommentIcon /></StatusItem>
        <StatusText $w={71} $pad={2}>Comments</StatusText>
        <StatusItem $w={35} $on><NormalView /></StatusItem>
        <StatusItem $w={35}><GridView /></StatusItem>
        <StatusItem $w={35}><ReadView /></StatusItem>
        <StatusItem $w={35}><ShowView /></StatusItem>
        <StatusItem $w={16} $ml={1}><Svg w={7} h={2}><path d="M0 1h7" stroke="#555" strokeWidth="1.5" /></Svg></StatusItem>
        <ZoomTrack><ZoomTick /><ZoomKnob /></ZoomTrack>
        <StatusItem $w={13}><Svg w={8} h={8}><path d="M0 4h8M4 0v8" stroke="#555" strokeWidth="1.3" /></Svg></StatusItem>
        <StatusText $w={32} $pad={8}>71%</StatusText>
        <StatusItem $w={14} $ml={7}><FitIcon /></StatusItem>
      </StatusBar>
      <Strip><StripWhite /></Strip>
    </Win>
  </Page>
);

export default App;
